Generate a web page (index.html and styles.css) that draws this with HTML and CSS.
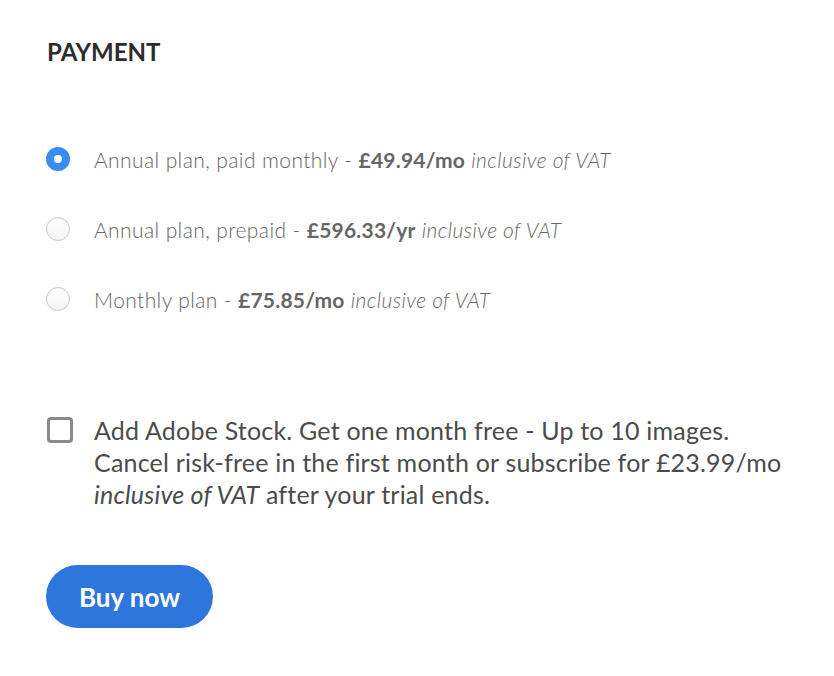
FILE: index.html
```html
<!DOCTYPE html>
<html lang="en">
<head>
<meta charset="utf-8">
<title>Payment</title>
<link rel="stylesheet" href="styles.css">
</head>
<body>
<main class="payment">
  <h2 class="title">PAYMENT</h2>
  <ul class="plans">
    <li class="plan">
      <span class="radio checked"></span>
      <span class="plan-text">Annual plan, paid monthly - <b>£49.94/mo</b> <i>inclusive of VAT</i></span>
    </li>
    <li class="plan">
      <span class="radio"></span>
      <span class="plan-text">Annual plan, prepaid - <b>£596.33/yr</b> <i>inclusive of VAT</i></span>
    </li>
    <li class="plan">
      <span class="radio"></span>
      <span class="plan-text">Monthly plan - <b>£75.85/mo</b> <i>inclusive of VAT</i></span>
    </li>
  </ul>
  <div class="stock">
    <span class="checkbox"></span>
    <p class="stock-text">Add Adobe Stock. Get one month free - Up to 10 images.<br>Cancel risk-free in the first month or subscribe for £23.99/mo<br><i>inclusive of VAT</i> after your trial ends.</p>
  </div>
  <button class="buy">Buy now</button>
</main>
</body>
</html>
```
FILE: styles.css
```css
html, body {
  margin: 0;
  padding: 0;
  background: #ffffff;
}
body {
  font-family: Lato, "Open Sans", sans-serif;
}
.payment {
  padding: 38px 0 0 46px;
  display: flex;
  flex-direction: column;
  align-items: flex-start;
}
.title {
  margin: 0 0 0 1px;
  font-size: 24px;
  font-weight: 700;
  color: #2c2c2c;
  line-height: 28px;
  letter-spacing: 0;
}
.plans {
  list-style: none;
  margin: 78px 0 0 0;
  padding: 0;
  display: flex;
  flex-direction: column;
  gap: 40px;
}
.plan {
  display: flex;
  align-items: center;
  height: 30px;
  gap: 24px;
}
.radio {
  width: 24px;
  height: 24px;
  box-sizing: border-box;
  border-radius: 50%;
  border: 1px solid #cacaca;
  background: linear-gradient(#ffffff, #f4f4f4);
  box-shadow: inset 0 1px 2px rgba(0, 0, 0, 0.04);
  flex: none;
}
.radio.checked {
  border: 8px solid #378ef0;
  background: #ffffff;
  box-shadow: none;
}
.plan-text {
  font-size: 21px;
  font-weight: 300;
  letter-spacing: 0.4px;
  color: #666666;
}
.plan-text b {
  font-weight: 700;
  letter-spacing: 0.2px;
}
.plan-text i {
  font-style: italic;
}
.stock {
  margin-top: 100px;
  display: flex;
  align-items: flex-start;
  gap: 21px;
}
.checkbox {
  width: 26px;
  height: 26px;
  box-sizing: border-box;
  border: 3px solid #8a8a8a;
  border-radius: 4px;
  margin: 3px 0 0 1px;
  flex: none;
}
.stock-text {
  margin: 0;
  font-size: 25px;
  line-height: 32px;
  letter-spacing: 0.2px;
  color: #4b4b4b;
}
.buy {
  margin-top: 55px;
  width: 167px;
  height: 63px;
  border: none;
  border-radius: 32px;
  background: #2f76dc;
  color: #ffffff;
  font-family: Lato, "Open Sans", sans-serif;
  font-size: 26px;
  font-weight: 700;
  cursor: pointer;
}
```
